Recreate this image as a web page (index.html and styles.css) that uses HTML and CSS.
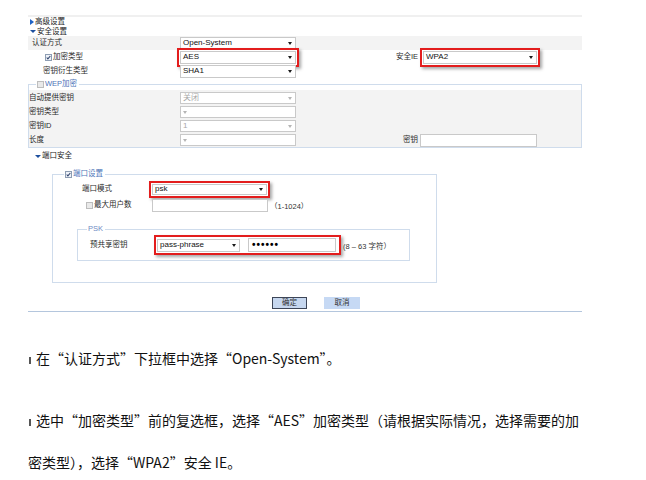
FILE: index.html
```html
<!DOCTYPE html>
<html lang="zh-CN">
<head>
<meta charset="utf-8">
<title>安全设置</title>
<link rel="stylesheet" href="styles.css">
</head>
<body>
<div class="ui">
  <div class="topline"></div>
  <div class="sec"><span class="tri-r"></span>高级设置</div>
  <div class="sec"><span class="tri-d"></span>安全设置</div>

  <div class="row shade">
    <div class="lab l1">认证方式</div>
    <div class="sel">Open-System</div>
  </div>
  <div class="row">
    <div class="lab l2"><svg class="cb" viewBox="0 0 7 7" width="7" height="7"><rect x="0.5" y="0.5" width="6" height="6" fill="#eef2f8" stroke="#8d9db3"/><path d="M1.7 3.5 2.9 4.8 5.3 2" fill="none" stroke="#33466e" stroke-width="1.1"/></svg>加密类型</div>
    <div class="sel hl">AES</div>
    <div class="lab rlab">安全IE</div>
    <div class="sel hl">WPA2</div>
  </div>
  <div class="row">
    <div class="lab l3">密钥衍生类型</div>
    <div class="sel">SHA1</div>
  </div>

  <fieldset class="wep">
    <legend><svg class="cb" viewBox="0 0 7 7" width="7" height="7"><rect x="0.5" y="0.5" width="6" height="6" fill="#e9e9e9" stroke="#bdbdbd"/></svg>WEP加密</legend>
    <div class="wep-body">
      <div class="wrow"><div class="lab">自动提供密钥</div><div class="sel dis">关闭</div></div>
      <div class="wrow"><div class="lab">密钥类型</div><div class="sel dis"></div></div>
      <div class="wrow"><div class="lab">密钥ID</div><div class="sel dis">1</div></div>
      <div class="wrow"><div class="lab">长度</div><div class="sel dis"></div><div class="lab rlab">密钥</div><div class="inp"></div></div>
    </div>
  </fieldset>

  <div class="sec sec2"><span class="tri-d"></span>端口安全</div>

  <fieldset class="port">
    <legend><svg class="cb" viewBox="0 0 7 7" width="7" height="7"><rect x="0.5" y="0.5" width="6" height="6" fill="#eef2f8" stroke="#8d9db3"/><path d="M1.7 3.5 2.9 4.8 5.3 2" fill="none" stroke="#33466e" stroke-width="1.1"/></svg>端口设置</legend>
    <div class="prow">
      <div class="lab pl1">端口模式</div>
      <div class="sel hl psel">psk</div>
    </div>
    <div class="prow gap">
      <div class="lab pl2"><svg class="cb" viewBox="0 0 7 7" width="7" height="7"><rect x="0.5" y="0.5" width="6" height="6" fill="#e9e9e9" stroke="#bdbdbd"/></svg>最大用户数</div>
      <div class="inp"></div>
      <span class="hint">（1-1024）</span>
    </div>
    <fieldset class="psk">
      <legend class="psk-lg">PSK</legend>
      <div class="krow">
        <div class="lab kl">预共享密钥</div>
        <div class="hlbox">
          <div class="sel ksel">pass-phrase</div>
          <div class="inp pw">••••••</div>
        </div>
        <span class="hint khint">(8 – 63 字符）</span>
      </div>
    </fieldset>
  </fieldset>

  <div class="btns"><button class="btn ok">确定</button><button class="btn cancel">取消</button></div>
  <div class="endline"></div>
</div>

<div class="notes">
  <p><span class="mk"></span>在“认证方式”下拉框中选择“Open-System”。</p>
  <p><span class="mk"></span>选中“加密类型”前的复选框，选择“AES”加密类型（请根据实际情况，选择需要的加<br>密类型），选择“WPA2”安全 IE。</p>
</div>
</body>
</html>
```
FILE: styles.css
```css
* { box-sizing: border-box; }
html, body { margin: 0; padding: 0; }
body {
  width: 646px;
  height: 480px;
  overflow: hidden;
  background: #fff;
  font-family: "Liberation Sans", "Noto Sans CJK SC", sans-serif;
  font-size: 7.5px;
  color: #333;
}

.ui { margin-left: 28px; width: 554px; padding-top: 15px; }
.topline { height: 2px; background: #f0f0f0; }

.sec {
  display: flex;
  align-items: center;
  height: 9.5px;
  line-height: 9.5px;
  padding-left: 2px;
  color: #222;
}
.sec2 { height: 16px; padding-left: 7px; }
.tri-r {
  width: 0; height: 0;
  border-left: 4px solid #1e63c6;
  border-top: 3px solid transparent;
  border-bottom: 3px solid transparent;
  margin-right: 1px;
}
.tri-d {
  width: 0; height: 0;
  border-top: 3px solid #1d4f9e;
  border-left: 3px solid transparent;
  border-right: 3px solid transparent;
  margin-right: 1px;
}

.row {
  display: grid;
  grid-template-columns: 152px 116px 127px 114px;
  height: 14px;
  align-items: center;
}
.shade { background: #f3f3f3; }

.lab {
  display: flex;
  align-items: center;
  line-height: 10px;
  white-space: nowrap;
  color: #2a2a2a;
}
.l1 { padding-left: 4px; }
.l2 { padding-left: 17px; }
.l3 { padding-left: 15px; }
.rlab { justify-content: flex-end; padding-right: 5px; }

.cb { margin-right: 1px; flex: none; vertical-align: middle; }

.sel {
  height: 13px;
  border: 1px solid #c9c9c9;
  background: #fff;
  display: flex;
  align-items: center;
  justify-content: space-between;
  padding-left: 2px;
  font-size: 8px;
  line-height: 10px;
  color: #111;
  white-space: nowrap;
}
.sel::after {
  content: "";
  border-top: 3px solid #1a1a1a;
  border-left: 2.5px solid transparent;
  border-right: 2.5px solid transparent;
  margin-right: 3px;
}
.sel.dis { color: #a8a8a8; }
.sel.dis::after { border-top-color: #b5b5b5; }

.hl, .hlbox {
  box-shadow: 0 0 0 1px #fff, 0 0 0 3px #e31d1d, 2px 2px 3px 3px rgba(0, 0, 0, 0.35);
}

.inp { height: 13px; border: 1px solid #c9c9c9; background: #fff; }

fieldset {
  margin: 0;
  padding: 0;
  min-width: 0;
  border: 1px solid #cfdcec;
}
legend {
  padding: 0 2px 0 1px;
  height: 10px;
  line-height: 10px;
  color: #4d74b8;
  white-space: nowrap;
}

.wep { margin-top: 1px; padding-top: 1px; }
.wep legend { margin-left: 7px; }
.wep-body { background: #f3f3f3; padding-top: 1px; }
.wrow {
  display: grid;
  grid-template-columns: 151px 116px 123px 118px;
  height: 14px;
  align-items: center;
}
.wrow .sel { height: 12px; }
.wrow .rlab { padding-right: 1px; }
.wrow .inp { margin-left: 1px; }

.port { margin: 5px 0 0 24px; width: 385px; padding: 3px 0 21px; }
.port legend { margin-left: 11px; }
.prow {
  display: grid;
  grid-template-columns: 99px 116px auto;
  height: 14px;
  align-items: center;
}
.prow.gap { margin-top: 2px; }
.pl1 { padding-left: 29px; }
.pl2 { padding-left: 33px; }
.psel { width: 115px; height: 11px; }
.hint { margin-left: 2px; color: #333; white-space: nowrap; }

.psk { margin: 12px 0 0 24px; width: 333px; padding: 4px 0 8px; }
.psk .psk-lg { margin-left: 9px; color: #6f8cc4; }
.krow { display: flex; align-items: center; height: 14px; }
.kl { width: 79px; padding-left: 12px; }
.hlbox { display: flex; align-items: center; gap: 8px; height: 14px; padding-right: 2px; }
.ksel { width: 83px; }
.pw {
  width: 88px;
  height: 14px;
  padding-left: 3px;
  font-size: 10px;
  font-weight: bold;
  letter-spacing: 1px;
  line-height: 12px;
  color: #000;
}
.khint { margin-left: 5px; }

.btns { display: flex; gap: 17px; padding-left: 244px; margin-top: 14px; }
.btn {
  height: 12px;
  width: 35px;
  padding: 0;
  border: 1px solid #3d4658;
  background: #c6d7ef;
  font-family: inherit;
  font-size: 7.5px;
  line-height: 10px;
  color: #333;
}
.btn.cancel { width: 36px; border-color: #c6d9f4; background: #c6d9f4; }
.endline { height: 1px; background: #b4c6dd; margin-top: 2px; }

.notes {
  margin: 25px 0 0 28px;
  font-family: "Noto Sans CJK SC", sans-serif;
  font-size: 14px;
  color: #111;
}
.notes p { margin: 0 0 20px; line-height: 42px; white-space: nowrap; }
.mk {
  display: inline-block;
  width: 2px;
  height: 7px;
  background: #555;
  margin: 0 5px 0 1px;
}
```
